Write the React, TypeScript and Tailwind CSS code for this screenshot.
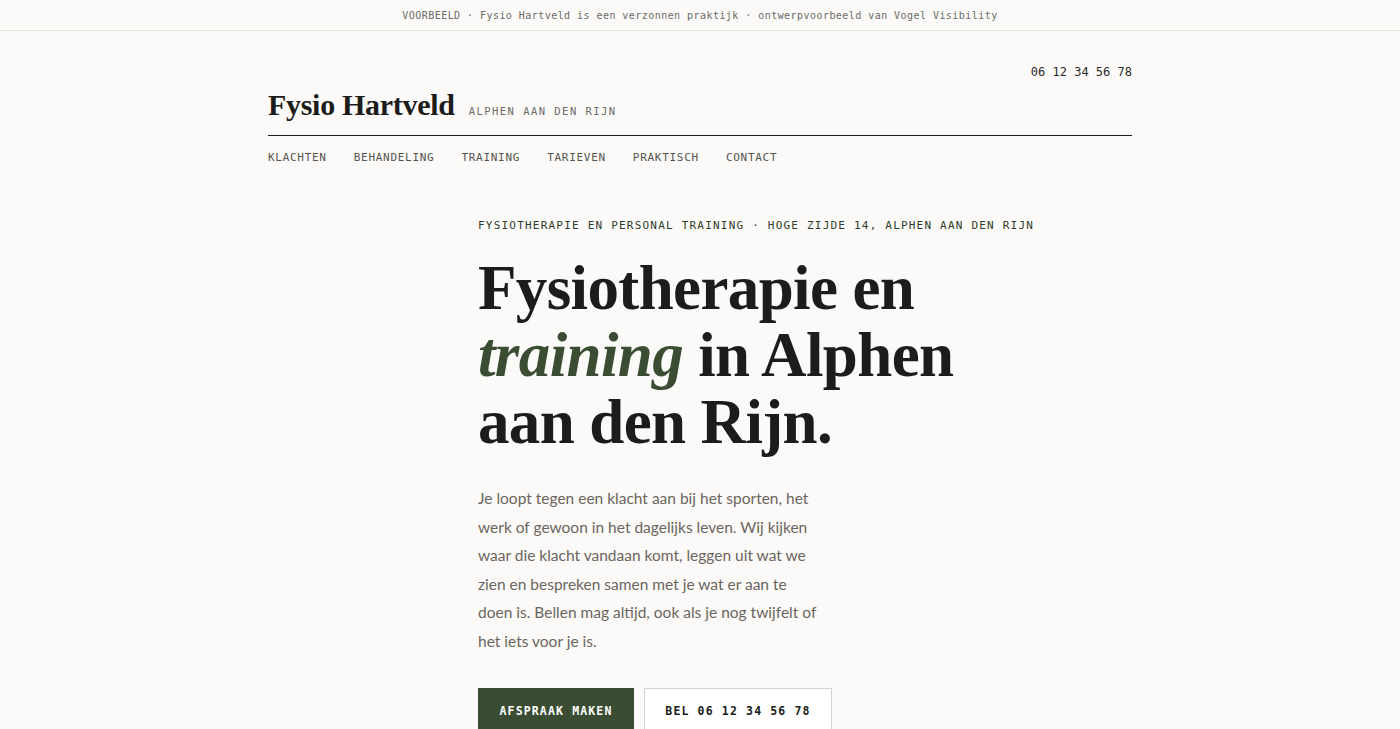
import React from "react";

export default function App() {
  return (
    <div className="min-h-screen bg-[#fbfaf8] text-[#1c1c1a]">
      <div className="h-[31px] border-b border-[#e6e3de] flex items-center justify-center font-['DejaVu_Sans_Mono',monospace] text-[10px] tracking-[0.045em] text-[#6b6a66]">
        VOORBEELD · Fysio Hartveld is een verzonnen praktijk · ontwerpvoorbeeld van Vogel Visibility
      </div>

      <header className="mx-auto w-[864px] pt-[33px]">
        <div className="flex justify-end font-['DejaVu_Sans_Mono',monospace] text-[12px] leading-[16px] text-[#2a2a28]">
          06 12 34 56 78
        </div>
        <div className="flex items-baseline gap-[14px] mt-[8px] pb-[13px] border-b border-[#1c1c1a]">
          <span className="font-['Liberation_Serif',serif] text-[30px] leading-[34px] font-bold tracking-[-0.01em]">
            Fysio Hartveld
          </span>
          <span className="font-['DejaVu_Sans_Mono',monospace] text-[10.5px] tracking-[0.14em] text-[#6b6a66]">
            ALPHEN AAN DEN RIJN
          </span>
        </div>
        <nav className="flex gap-[27px] pt-[14px] font-['DejaVu_Sans_Mono',monospace] text-[11px] leading-[16px] tracking-[0.065em] text-[#55544f]">
          <span>KLACHTEN</span>
          <span>BEHANDELING</span>
          <span>TRAINING</span>
          <span>TARIEVEN</span>
          <span>PRAKTISCH</span>
          <span>CONTACT</span>
        </nav>
      </header>

      <main className="mx-auto w-[864px] pl-[210px] pt-[52px]">
        <div className="font-['DejaVu_Sans_Mono',monospace] text-[11px] leading-[16px] tracking-[0.11em] text-[#2e3a2a]">
          FYSIOTHERAPIE EN PERSONAL TRAINING · HOGE ZIJDE 14, ALPHEN AAN DEN RIJN
        </div>
        <h1 className="mt-[21px] font-['Liberation_Serif',serif] text-[63px] leading-[67px] font-bold tracking-[-0.01em] text-[#1c1c1a]">
          Fysiotherapie en
          <br />
          <em className="italic text-[#3a4d33]">training</em> in Alphen
          <br />
          aan den Rijn.
        </h1>
        <p className="mt-[28px] w-[342px] font-['Lato',sans-serif] text-[15.5px] leading-[28.5px] text-[#6b6560]">
          Je loopt tegen een klacht aan bij het sporten, het werk of gewoon in het dagelijks leven. Wij kijken
          waar die klacht vandaan komt, leggen uit wat we zien en bespreken samen met je wat er aan te doen is.
          Bellen mag altijd, ook als je nog twijfelt of het iets voor je is.
        </p>
        <div className="mt-[33px] flex gap-[10px]">
          <button className="h-[48px] w-[156px] bg-[#3a4d33] text-white font-['DejaVu_Sans_Mono',monospace] text-[11.5px] font-bold tracking-[0.1em]">
            AFSPRAAK MAKEN
          </button>
          <button className="h-[48px] w-[188px] bg-white border border-[#d6d3ce] text-[#1c1c1a] font-['DejaVu_Sans_Mono',monospace] text-[11.5px] font-bold tracking-[0.1em]">
            BEL 06 12 34 56 78
          </button>
        </div>
      </main>
    </div>
  );
}
